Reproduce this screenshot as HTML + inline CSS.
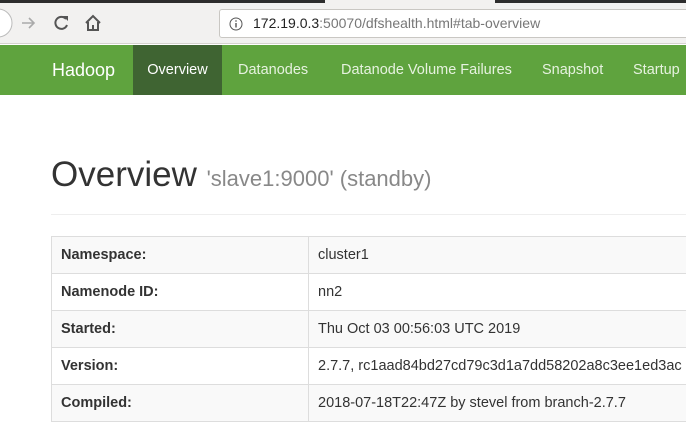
<!DOCTYPE html>
<html><head><style>
*{margin:0;padding:0;box-sizing:border-box}
body{width:686px;height:401px;overflow:hidden;background:#fff;font-family:"Liberation Sans",sans-serif;position:relative}
.top{position:absolute;left:0;top:0;width:686px;height:3px;background:#2d2d2d}
.top i{position:absolute;left:325px;width:170px;top:0;height:3px;background:#f2f1f0}
.tb{position:absolute;top:3px;left:0;width:686px;height:41px;background:#f2f1f0;border-bottom:1px solid #d5d3cf}
.url{position:absolute;left:219px;top:6px;width:480px;height:29px;background:#fff;border:1px solid #c9c7c3;border-radius:3px;font-size:14px;line-height:27px;padding-left:33px;color:#777}
.url b{font-weight:normal;color:#222}
.nav{position:absolute;top:45px;left:0;width:686px;height:50px;background:#5fa33e;color:#fff;font-size:14.5px}
.nav span{position:absolute;top:0;line-height:50px;color:#e6f2df}
.act{background:#3f6432}
h1{position:absolute;left:51px;top:155px;font-weight:normal;font-size:35px;color:#333}
h1 small{font-size:22px;color:#888}
.hr{position:absolute;left:51px;top:214px;width:640px;border-top:1px solid #eee}
table{position:absolute;left:51px;top:236px;border-collapse:collapse;font-size:14.5px;color:#333;table-layout:fixed;width:700px}
td{border:1px solid #ddd;height:37px;padding:0 9px;white-space:nowrap;overflow:hidden}
td:first-child{font-weight:bold}
tr:nth-child(odd){background:#f9f9f9}
</style></head><body>
<div class="top"><i></i></div>
<div class="tb">
<svg width="220" height="41" style="position:absolute;left:0;top:0">
<circle cx="-2" cy="20" r="14" fill="#fff" stroke="#bbb"/>
<path d="M22 20h12M29 15l5 5-5 5" stroke="#aaa" stroke-width="1.6" fill="none"/>
<path d="M66 16a6 6 0 1 0 1 6" stroke="#555" stroke-width="2" fill="none"/><path d="M63 13h5v5z" fill="#555"/>
<path d="M86 20l7-7 7 7M88 19v8h10v-8" stroke="#555" stroke-width="2" fill="none"/><rect x="92" y="22" width="2" height="5" fill="#555"/>
</svg>
<div class="url"><svg width="14" height="14" style="position:absolute;left:9px;top:7px"><circle cx="7" cy="7" r="6" fill="none" stroke="#555"/><rect x="6.3" y="6" width="1.4" height="4.5" fill="#555"/><rect x="6.3" y="3.3" width="1.4" height="1.4" fill="#555"/></svg><b>172.19.0.3</b>:50070/dfshealth.html#tab-overview</div>
</div>
<div class="nav">
<span style="left:52px;font-size:18px;color:#fff">Hadoop</span>
<span class="act" style="left:133px;width:89px;text-align:center;color:#fff">Overview</span>
<span style="left:238px">Datanodes</span>
<span style="left:341px">Datanode Volume Failures</span>
<span style="left:542px">Snapshot</span>
<span style="left:633px">Startup</span>
</div>
<h1>Overview <small>'slave1:9000' (standby)</small></h1>
<div class="hr"></div>
<table>
<colgroup><col style="width:257px"><col style="width:443px"></colgroup>
<tr><td>Namespace:</td><td>cluster1</td></tr>
<tr><td>Namenode ID:</td><td>nn2</td></tr>
<tr><td>Started:</td><td>Thu Oct 03 00:56:03 UTC 2019</td></tr>
<tr><td>Version:</td><td>2.7.7, rc1aad84bd27cd79c3d1a7dd58202a8c3ee1ed3ac</td></tr>
<tr><td>Compiled:</td><td>2018-07-18T22:47Z by stevel from branch-2.7.7</td></tr>
</table>
</body></html>
